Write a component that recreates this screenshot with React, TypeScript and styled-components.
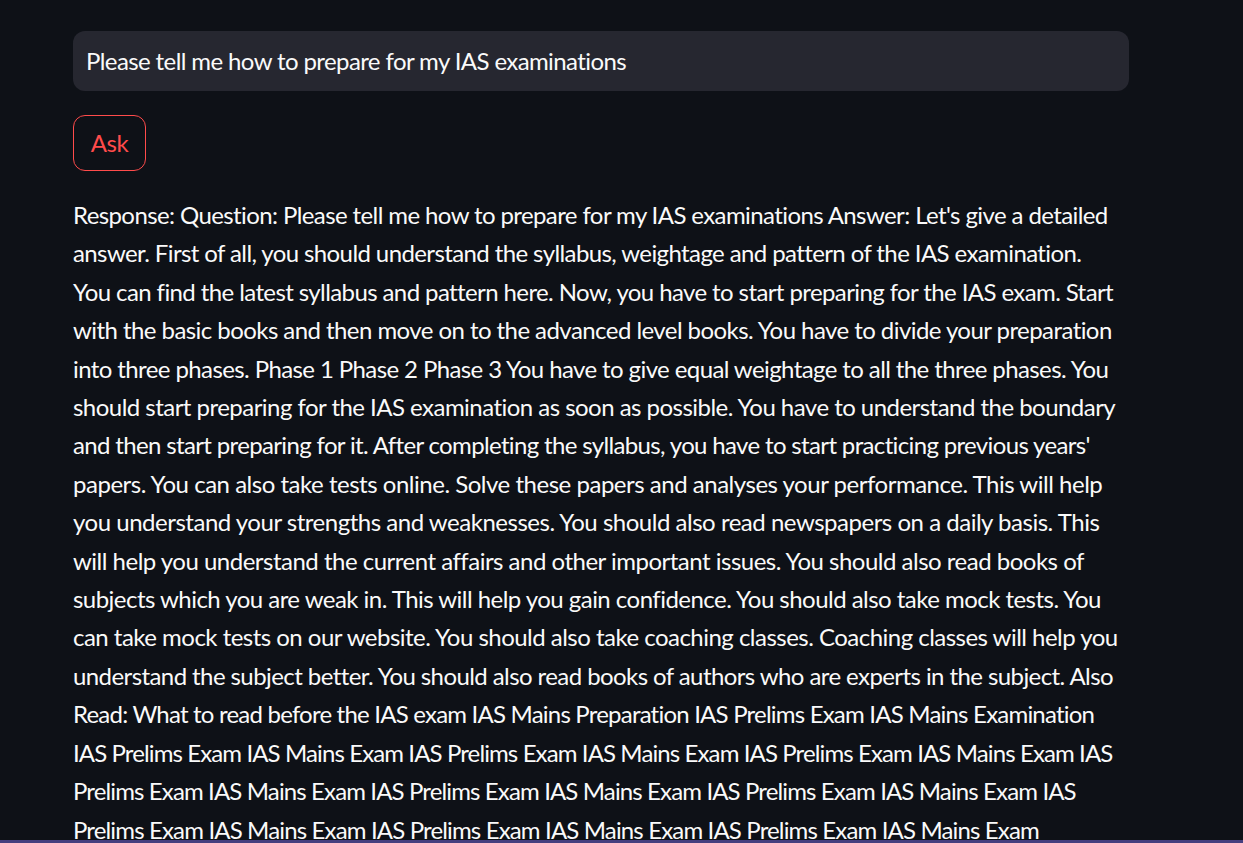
import React from "react";
import styled, { createGlobalStyle } from "styled-components";

const Global = createGlobalStyle`
  html, body { margin: 0; padding: 0; background: #0e1117; }
  body { font-family: "Source Sans Pro", Lato, "Noto Sans", sans-serif; color: #fafafa; }
`;

const Page = styled.div`
  height: 843px;
  box-sizing: border-box;
  overflow: hidden;
  background: #0e1117;
  border-bottom: 3px solid #453f7f;
  padding: 31px 0 0 73px;
`;

const Main = styled.div`
  width: 1056px;
  display: flex;
  flex-direction: column;
  align-items: flex-start;
`;

const Input = styled.div`
  width: 100%;
  height: 60px;
  box-sizing: border-box;
  background: #262730;
  border-radius: 12px;
  display: flex;
  align-items: center;
  padding: 0 13px 2px;
  font-size: 24px;
  color: #fafafa;
  letter-spacing: -0.6px;
`;

const AskButton = styled.button`
  margin-top: 24px;
  width: 73px;
  height: 56px;
  box-sizing: border-box;
  background: transparent;
  border: 1px solid #ff4b4b;
  border-radius: 12px;
  color: #ff4b4b;
  font-family: inherit;
  font-size: 24px;
  letter-spacing: -0.4px;
  padding: 0 0 2px;
`;

const Response = styled.div`
  margin-top: 25px;
  font-size: 24px;
  line-height: 38.4px;
  color: #fafafa;
`;

const Line = styled.span<{ $tracking: number }>`
  display: block;
  white-space: nowrap;
  letter-spacing: ${(p) => p.$tracking}px;
`;

const BASE = -0.6;

const lines: [string, number][] = [
  ["Response: Question: Please tell me how to prepare for my IAS examinations Answer: Let's give a detailed", 0],
  ["answer. First of all, you should understand the syllabus, weightage and pattern of the IAS examination.", 0],
  ["You can find the latest syllabus and pattern here. Now, you have to start preparing for the IAS exam. Start", 0],
  ["with the basic books and then move on to the advanced level books. You have to divide your preparation", 0.04],
  ["into three phases. Phase 1 Phase 2 Phase 3 You have to give equal weightage to all the three phases. You", 0],
  ["should start preparing for the IAS examination as soon as possible. You have to understand the boundary", 0.07],
  ["and then start preparing for it. After completing the syllabus, you have to start practicing previous years'", -0.05],
  ["papers. You can also take tests online. Solve these papers and analyses your performance. This will help", 0.12],
  ["you understand your strengths and weaknesses. You should also read newspapers on a daily basis. This", 0.12],
  ["will help you understand the current affairs and other important issues. You should also read books of", 0.1],
  ["subjects which you are weak in. This will help you gain confidence. You should also take mock tests. You", 0.07],
  ["can take mock tests on our website. You should also take coaching classes. Coaching classes will help you", 0.08],
  ["understand the subject better. You should also read books of authors who are experts in the subject. Also", 0.02],
  ["Read: What to read before the IAS exam IAS Mains Preparation IAS Prelims Exam IAS Mains Examination", -0.19],
  ["IAS Prelims Exam IAS Mains Exam IAS Prelims Exam IAS Mains Exam IAS Prelims Exam IAS Mains Exam IAS", -0.29],
  ["Prelims Exam IAS Mains Exam IAS Prelims Exam IAS Mains Exam IAS Prelims Exam IAS Mains Exam IAS", -0.27],
  ["Prelims Exam IAS Mains Exam IAS Prelims Exam IAS Mains Exam IAS Prelims Exam IAS Mains Exam", -0.25],
];

export default function App() {
  return (
    <>
      <Global />
      <Page>
        <Main>
          <Input>Please tell me how to prepare for my IAS examinations</Input>
          <AskButton>Ask</AskButton>
          <Response>
            {lines.map(([text, adj], i) => (
              <Line key={i} $tracking={BASE + adj}>
                {text}
              </Line>
            ))}
          </Response>
        </Main>
      </Page>
    </>
  );
}
